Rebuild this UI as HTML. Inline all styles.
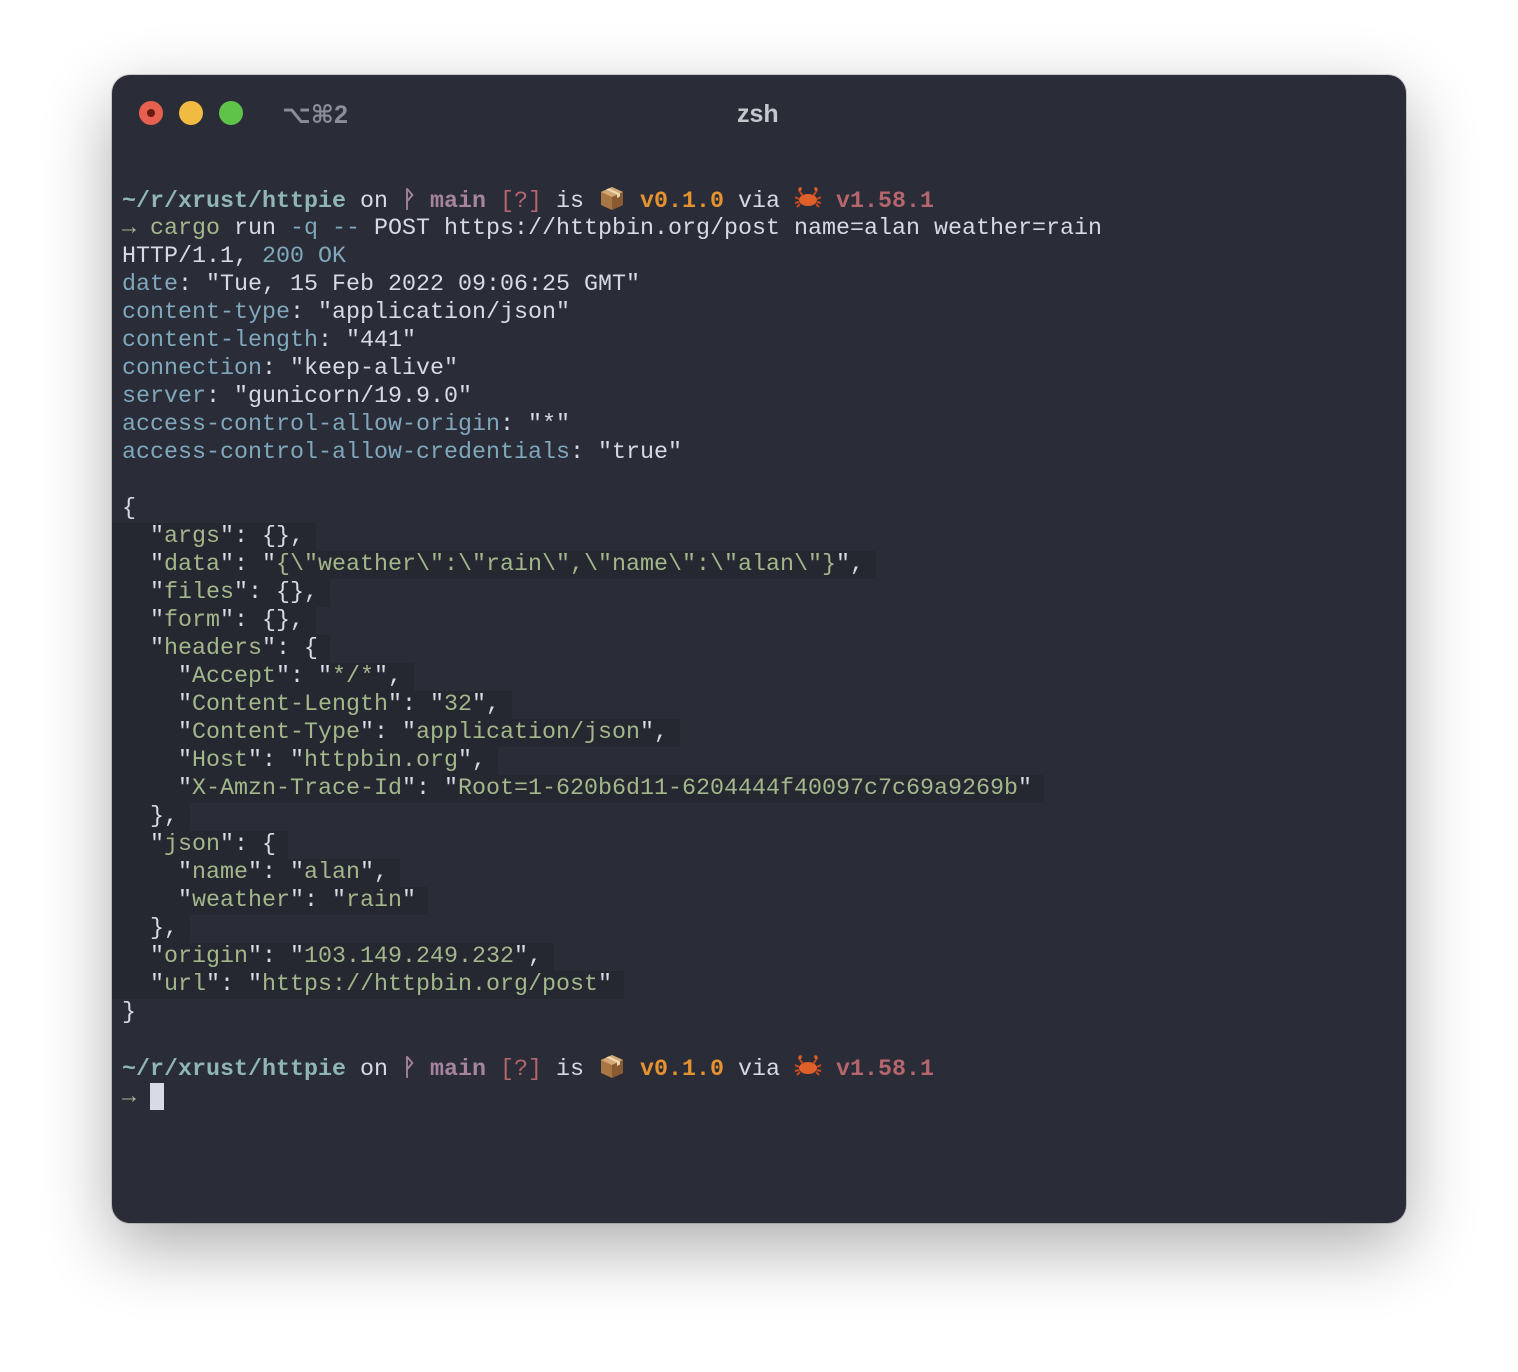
<!DOCTYPE html>
<html><head><meta charset="utf-8"><style>
html,body{margin:0;padding:0;background:#fff;width:1518px;height:1372px;overflow:hidden}
.win{position:absolute;left:112px;top:75px;width:1294px;height:1148px;background:#2a2c38;border-radius:18px;box-shadow:0 24px 70px rgba(0,0,0,0.33),0 0 0 1px rgba(0,0,0,0.15)}
.dot{position:absolute;top:101px;width:24px;height:24px;border-radius:50%}
.t{position:absolute;font-family:"Liberation Sans","DejaVu Sans",sans-serif;font-weight:bold;font-size:25px;top:100px}
.term{position:absolute;left:112px;top:187px;font-family:"Liberation Mono","DejaVu Sans Mono",monospace;font-size:23.33px;color:#d6dae3}
.l{height:28px;line-height:28px;padding-left:10px;white-space:pre}
.h{background:#252731;padding-left:10px;padding-right:12px;margin-left:-10px;display:inline-block;height:28px}
.c{color:#7fa8bc}.g{color:#a3b88a}.tp{color:#8fb5b5;font-weight:bold}.pu{color:#a7849e;font-weight:bold}.rd{color:#b5656c}.rb{color:#b5656c;font-weight:bold}.or{color:#e59330;font-weight:bold}
.ar{color:#a3b88a;font-weight:bold}
svg{vertical-align:-5px}
</style></head><body>
<div class="win"></div>
<div class="dot" style="left:139px;background:#e5604f"><div style="position:absolute;left:8px;top:8px;width:8px;height:8px;border-radius:50%;background:#6a1a10"></div></div>
<div class="dot" style="left:179px;background:#f0bb40"></div>
<div class="dot" style="left:219px;background:#5fc249"></div>
<div class="t" style="left:282px;color:#8b8e97">⌥⌘2</div>
<div class="t" style="left:737px;color:#c5c7cd">zsh</div>
<div class="term"><div class="l" style="margin-top:-3px;margin-bottom:3px"><span class="tp">~/r/xrust/httpie</span> on <span class="pu">ᚹ main</span> <span class="rd">[?]</span> is <svg width="28" height="28" viewBox="0 0 28 28"><path d="M3 8 L14 3 L25 8 L25 21 L14 26 L3 21Z" fill="#a87544"/><path d="M3 8 L14 13 L25 8 L14 3Z" fill="#d3a774"/><path d="M14 13 L14 26 L25 21 L25 8Z" fill="#8a5a30"/><path d="M8 5.5 L19 10.5 L19 14 L22 12.5 L22 9.5 L11 4.2Z" fill="#ecd8b0"/></svg> <span class="or">v0.1.0</span> via <svg width="28" height="28" viewBox="0 0 28 28"><ellipse cx="14" cy="16" rx="9" ry="6" fill="#e0602a"/><path d="M5 8 C3 4 6 2 8 4 L7 7Z M23 8 C25 4 22 2 20 4 L21 7Z" fill="#e0602a"/><path d="M5 15 L1 13 M5 18 L1 19 M6 20 L3 23 M23 15 L27 13 M23 18 L27 19 M22 20 L25 23 M6 8 L9 12 M22 8 L19 12" stroke="#c84b1e" stroke-width="2"/></svg> <span class="rb">v1.58.1</span></div>
<div class="l"><span class="ar">→</span> <span class="g">cargo</span> run <span class="c">-q</span> <span class="c">--</span> POST https://httpbin.org/post name=alan weather=rain</div>
<div class="l">HTTP/1.1, <span class="c">200 OK</span></div>
<div class="l"><span class="c">date</span>: "Tue, 15 Feb 2022 09:06:25 GMT"</div>
<div class="l"><span class="c">content-type</span>: "application/json"</div>
<div class="l"><span class="c">content-length</span>: "441"</div>
<div class="l"><span class="c">connection</span>: "keep-alive"</div>
<div class="l"><span class="c">server</span>: "gunicorn/19.9.0"</div>
<div class="l"><span class="c">access-control-allow-origin</span>: "*"</div>
<div class="l"><span class="c">access-control-allow-credentials</span>: "true"</div>
<div class="l"> </div>
<div class="l">{</div>
<div class="l"><span class="h">  "<span class="g">args</span>": {},</span></div>
<div class="l"><span class="h">  "<span class="g">data</span>": "<span class="g">{\"weather\":\"rain\",\"name\":\"alan\"}</span>",</span></div>
<div class="l"><span class="h">  "<span class="g">files</span>": {},</span></div>
<div class="l"><span class="h">  "<span class="g">form</span>": {},</span></div>
<div class="l"><span class="h">  "<span class="g">headers</span>": {</span></div>
<div class="l"><span class="h">    "<span class="g">Accept</span>": "<span class="g">*/*</span>",</span></div>
<div class="l"><span class="h">    "<span class="g">Content-Length</span>": "<span class="g">32</span>",</span></div>
<div class="l"><span class="h">    "<span class="g">Content-Type</span>": "<span class="g">application/json</span>",</span></div>
<div class="l"><span class="h">    "<span class="g">Host</span>": "<span class="g">httpbin.org</span>",</span></div>
<div class="l"><span class="h">    "<span class="g">X-Amzn-Trace-Id</span>": "<span class="g">Root=1-620b6d11-6204444f40097c7c69a9269b</span>"</span></div>
<div class="l"><span class="h">  },</span></div>
<div class="l"><span class="h">  "<span class="g">json</span>": {</span></div>
<div class="l"><span class="h">    "<span class="g">name</span>": "<span class="g">alan</span>",</span></div>
<div class="l"><span class="h">    "<span class="g">weather</span>": "<span class="g">rain</span>"</span></div>
<div class="l"><span class="h">  },</span></div>
<div class="l"><span class="h">  "<span class="g">origin</span>": "<span class="g">103.149.249.232</span>",</span></div>
<div class="l"><span class="h">  "<span class="g">url</span>": "<span class="g">https://httpbin.org/post</span>"</span></div>
<div class="l">}</div>
<div class="l"> </div>
<div class="l" style="margin-top:-3px;margin-bottom:3px"><span class="tp">~/r/xrust/httpie</span> on <span class="pu">ᚹ main</span> <span class="rd">[?]</span> is <svg width="28" height="28" viewBox="0 0 28 28"><path d="M3 8 L14 3 L25 8 L25 21 L14 26 L3 21Z" fill="#a87544"/><path d="M3 8 L14 13 L25 8 L14 3Z" fill="#d3a774"/><path d="M14 13 L14 26 L25 21 L25 8Z" fill="#8a5a30"/><path d="M8 5.5 L19 10.5 L19 14 L22 12.5 L22 9.5 L11 4.2Z" fill="#ecd8b0"/></svg> <span class="or">v0.1.0</span> via <svg width="28" height="28" viewBox="0 0 28 28"><ellipse cx="14" cy="16" rx="9" ry="6" fill="#e0602a"/><path d="M5 8 C3 4 6 2 8 4 L7 7Z M23 8 C25 4 22 2 20 4 L21 7Z" fill="#e0602a"/><path d="M5 15 L1 13 M5 18 L1 19 M6 20 L3 23 M23 15 L27 13 M23 18 L27 19 M22 20 L25 23 M6 8 L9 12 M22 8 L19 12" stroke="#c84b1e" stroke-width="2"/></svg> <span class="rb">v1.58.1</span></div>
<div class="l"><span class="ar">→</span> <span style="display:inline-block;width:14px;height:27px;background:#d8dae6;vertical-align:-7px"></span></div></div>
</body></html>
